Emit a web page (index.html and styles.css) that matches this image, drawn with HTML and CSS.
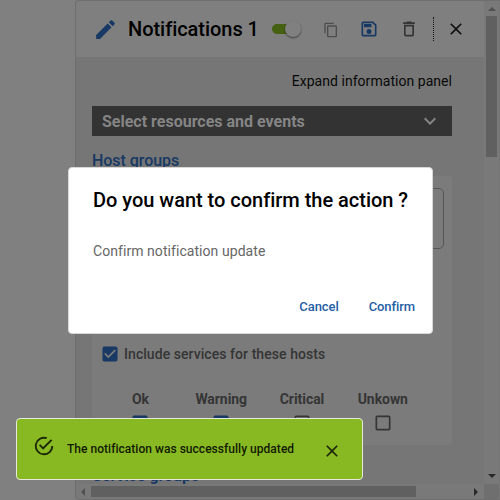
FILE: index.html
```html
<!DOCTYPE html>
<html lang="en">
<head>
<meta charset="utf-8">
<title>Notifications</title>
<link rel="stylesheet" href="styles.css">
</head>
<body>
<div class="drawer">
  <div class="main">
    <div class="content">
      <header class="header">
        <svg class="edit" viewBox="0 0 24 24"><path d="M3 17.25V21h3.75L17.81 9.94l-3.75-3.75L3 17.25zM20.71 7.04a1 1 0 0 0 0-1.41l-2.34-2.34a1 1 0 0 0-1.41 0l-1.83 1.83 3.75 3.75 1.83-1.83z"/></svg>
        <h1 class="title">Notifications 1</h1>
        <span class="switch"><span class="knob"></span></span>
        <svg class="copy" viewBox="0 0 24 24"><path d="M16 1H4a2 2 0 0 0-2 2v14h2V3h12V1zm3 4H8a2 2 0 0 0-2 2v14a2 2 0 0 0 2 2h11a2 2 0 0 0 2-2V7a2 2 0 0 0-2-2zm0 16H8V7h11v14z"/></svg>
        <svg class="save" viewBox="0 0 24 24"><path d="M17 3H5a2 2 0 0 0-2 2v14a2 2 0 0 0 2 2h14a2 2 0 0 0 2-2V7l-4-4zm2 16H5V5h11.17L19 7.83V19zm-7-7a3 3 0 1 0 0 6 3 3 0 0 0 0-6zM6 6h9v4H6z"/></svg>
        <svg class="trash" viewBox="0 0 24 24"><path d="M6 19a2 2 0 0 0 2 2h8a2 2 0 0 0 2-2V7H6v12zM8 9h8v10H8V9zm7.5-5-1-1h-5l-1 1H5v2h14V4h-3.500z"/></svg>
        <span class="divider"></span>
        <svg class="close" viewBox="0 0 24 24"><path d="M19 6.410 17.590 5 12 10.590 6.410 5 5 6.410 10.590 12 5 17.590 6.410 19 12 13.410 17.590 19 19 17.590 13.410 12z"/></svg>
      </header>
      <div class="body">
        <p class="expand">Expand information panel</p>
        <div class="section">
          <span>Select resources and events</span>
          <svg viewBox="0 0 24 24"><path d="M16.590 8.590 12 13.170 7.410 8.590 6 10l6 6 6-6z"/></svg>
        </div>
        <h2 class="group">Host groups</h2>
        <div class="card">
          <div class="field"></div>
          <div class="include">
            <svg class="check on" viewBox="0 0 24 24"><path d="M19 3H5a2 2 0 0 0-2 2v14a2 2 0 0 0 2 2h14a2 2 0 0 0 2-2V5a2 2 0 0 0-2-2zm-9 14-5-5 1.410-1.410L10 14.170l7.590-7.590L19 8l-9 9z"/></svg>
            <span>Include services for these hosts</span>
          </div>
          <div class="states">
            <div class="state"><span>Ok</span><svg class="check on" viewBox="0 0 24 24"><path d="M5 3h14a2 2 0 0 1 2 2v14a2 2 0 0 1-2 2H5a2 2 0 0 1-2-2V5a2 2 0 0 1 2-2z"/></svg></div>
            <div class="state"><span>Warning</span><svg class="check on" viewBox="0 0 24 24"><path d="M5 3h14a2 2 0 0 1 2 2v14a2 2 0 0 1-2 2H5a2 2 0 0 1-2-2V5a2 2 0 0 1 2-2z"/></svg></div>
            <div class="state"><span>Critical</span><svg class="check" viewBox="0 0 24 24"><path d="M19 5v14H5V5h14m0-2H5a2 2 0 0 0-2 2v14a2 2 0 0 0 2 2h14a2 2 0 0 0 2-2V5a2 2 0 0 0-2-2z"/></svg></div>
            <div class="state"><span>Unkown</span><svg class="check" viewBox="0 0 24 24"><path d="M19 5v14H5V5h14m0-2H5a2 2 0 0 0-2 2v14a2 2 0 0 0 2 2h14a2 2 0 0 0 2-2V5a2 2 0 0 0-2-2z"/></svg></div>
          </div>
        </div>
        <h2 class="group services">Service groups</h2>
      </div>
    </div>
    <div class="hbar"><i class="left"></i><span class="hthumb"></span><i class="right"></i></div>
  </div>
  <div class="vbar"><i class="up"></i><span class="vthumb"></span><i class="down"></i><span class="corner"></span></div>
</div>

<div class="dialog">
  <h2>Do you want to confirm the action ?</h2>
  <p>Confirm notification update</p>
  <div class="actions"><span>Cancel</span><span>Confirm</span></div>
</div>

<div class="toast">
  <svg class="done" viewBox="0 0 24 24"><path d="M20 12a8 8 0 1 1-5.800-7.690l1.570-1.570A10 10 0 1 0 22 12h-2zM7.910 10.080 6.500 11.500 11 16 21 6l-1.410-1.420L11 13.170z"/></svg>
  <span class="message">The notification was successfully updated</span>
  <svg class="dismiss" viewBox="0 0 24 24"><path d="M19 6.410 17.590 5 12 10.590 6.410 5 5 6.410 10.590 12 5 17.590 6.410 19 12 13.410 17.590 19 19 17.590 13.410 12z"/></svg>
</div>
</body>
</html>
```
FILE: styles.css
```css
* { box-sizing: border-box; }
body {
  margin: 0;
  width: 500px;
  height: 500px;
  overflow: hidden;
  position: relative;
  background: #808080;
  font-family: Roboto, "Liberation Sans", sans-serif;
}
h1, h2, p { margin: 0; }
svg { display: block; flex: none; fill: currentColor; }

.drawer {
  display: flex;
  margin-left: 75px;
  width: 425px;
  height: 500px;
  border: 1px solid #6e6e6e;
  border-right: 0;
  border-radius: 4px 0 0 4px;
  overflow: hidden;
  background: #767676;
}
.main { width: 408px; display: flex; flex-direction: column; }
.content { height: 483px; overflow: hidden; }
.header {
  display: flex;
  align-items: center;
  height: 56px;
  padding-left: 17px;
  background: #7f7f7f;
}
.edit { width: 25px; height: 25px; color: #173963; }
.title { width: 134px; margin-left: 10px; font-size: 20px; font-weight: 500; line-height: 24px; letter-spacing: -.04px; white-space: nowrap; color: #000; }
.switch { position: relative; width: 24px; height: 10px; margin-left: 10px; border-radius: 5px; background: #446011; }
.knob { position: absolute; right: -5px; top: -3px; width: 16px; height: 16px; border-radius: 50%; background: #808080; box-shadow: 0 1px 2px rgba(0,0,0,.5); }
.copy { width: 16px; height: 16px; margin: 2px 0 0 27px; color: #4d4d4d; }
.save { width: 20px; height: 20px; margin-left: 20px; color: #173963; }
.trash { width: 20px; height: 20px; margin-left: 20px; color: #353535; }
.divider { height: 24px; margin-left: 14px; border-left: 1px dotted #111; }
.close { width: 20px; height: 20px; margin-left: 12px; color: #101010; }

.body { padding: 14px 32px 0 16px; }
.expand { text-align: right; font-size: 14px; line-height: 20px; letter-spacing: .04px; color: #090909; }
.section {
  display: flex;
  align-items: center;
  justify-content: space-between;
  height: 30px;
  margin-top: 15px;
  padding: 0 10px;
  background: #333;
  color: #858585;
  font-size: 16px;
  font-weight: 700;
}
.section svg { width: 24px; height: 24px; }
.group { margin-top: 15px; font-size: 16px; line-height: 20px; font-weight: 500; letter-spacing: -.05px; color: #173963; }
.card { height: 269px; margin-top: 5px; padding: 12px 8px 0; border-radius: 4px; background: #7b7b7b; }
.field { height: 61px; border: 1px solid #565656; border-radius: 5px; }
.include { display: flex; align-items: center; height: 20px; margin-top: 95px; font-size: 14px; font-weight: 500; letter-spacing: .06px; color: #353535; }
.include span { margin-left: 4px; }
.check { width: 20px; height: 20px; color: #353535; }
.check.on { color: #173963; }
.states { display: grid; grid-template-columns: repeat(4, 80.8px); margin-top: 26px; }
.state { display: flex; flex-direction: column; align-items: center; gap: 5px; font-size: 14px; font-weight: 700; line-height: 18px; letter-spacing: -.06px; color: #353535; }
.services { margin-top: 21px; font-weight: 700; }

.hbar { display: flex; align-items: center; height: 15px; padding: 0 6px 0 5px; background: #797979; }
.hthumb { width: 325px; height: 11px; margin-left: 6px; background: #606060; }
.hbar .left { border: 4px solid transparent; border-left: 0; border-right-color: #505050; }
.hbar .right { margin-left: auto; border: 4px solid transparent; border-right: 0; border-left-color: #282828; }
.vbar { display: flex; flex-direction: column; align-items: center; width: 15px; padding-top: 6px; background: #797979; }
.vthumb { width: 11px; height: 141px; margin-top: 5px; background: #606060; }
.vbar .up { border: 4px solid transparent; border-top: 0; border-bottom-color: #505050; }
.vbar .down { margin-top: auto; border: 4px solid transparent; border-bottom: 0; border-top-color: #282828; }
.corner { width: 15px; height: 15px; margin-top: 6px; background: #6f6f6f; }

.dialog {
  position: absolute;
  left: 68px;
  top: 167px;
  width: 365px;
  height: 167px;
  padding: 16px 18px 0 25px;
  border: 1px solid #d8d8d8;
  border-radius: 4px;
  background: #fff;
}
.dialog h2 { margin-left: -1px; font-size: 20px; font-weight: 500; line-height: 32px; letter-spacing: -.02px; white-space: nowrap; color: #000; }
.dialog p { margin: 25px 0 0 -1px; font-size: 14px; line-height: 20px; letter-spacing: .06px; color: #666; }
.actions { display: flex; justify-content: flex-end; gap: 30px; margin: 36px -1px 0 0; font-size: 13px; font-weight: 500; line-height: 20px; letter-spacing: -.08px; color: #255ea6; }

.toast {
  position: absolute;
  left: 16px;
  top: 418px;
  width: 347px;
  height: 62px;
  display: flex;
  align-items: center;
  padding-left: 16px;
  border: 1px solid #e4e9da;
  border-radius: 4px;
  background: #88b922;
  color: #1c2707;
}
.done { width: 22px; height: 22px; margin-bottom: 6px; }
.message { width: 227px; margin-left: 12px; font-size: 12px; font-weight: 500; letter-spacing: .03px; white-space: nowrap; color: #121904; }
.dismiss { width: 20px; height: 20px; margin: 4px 0 0 28px; }
```
